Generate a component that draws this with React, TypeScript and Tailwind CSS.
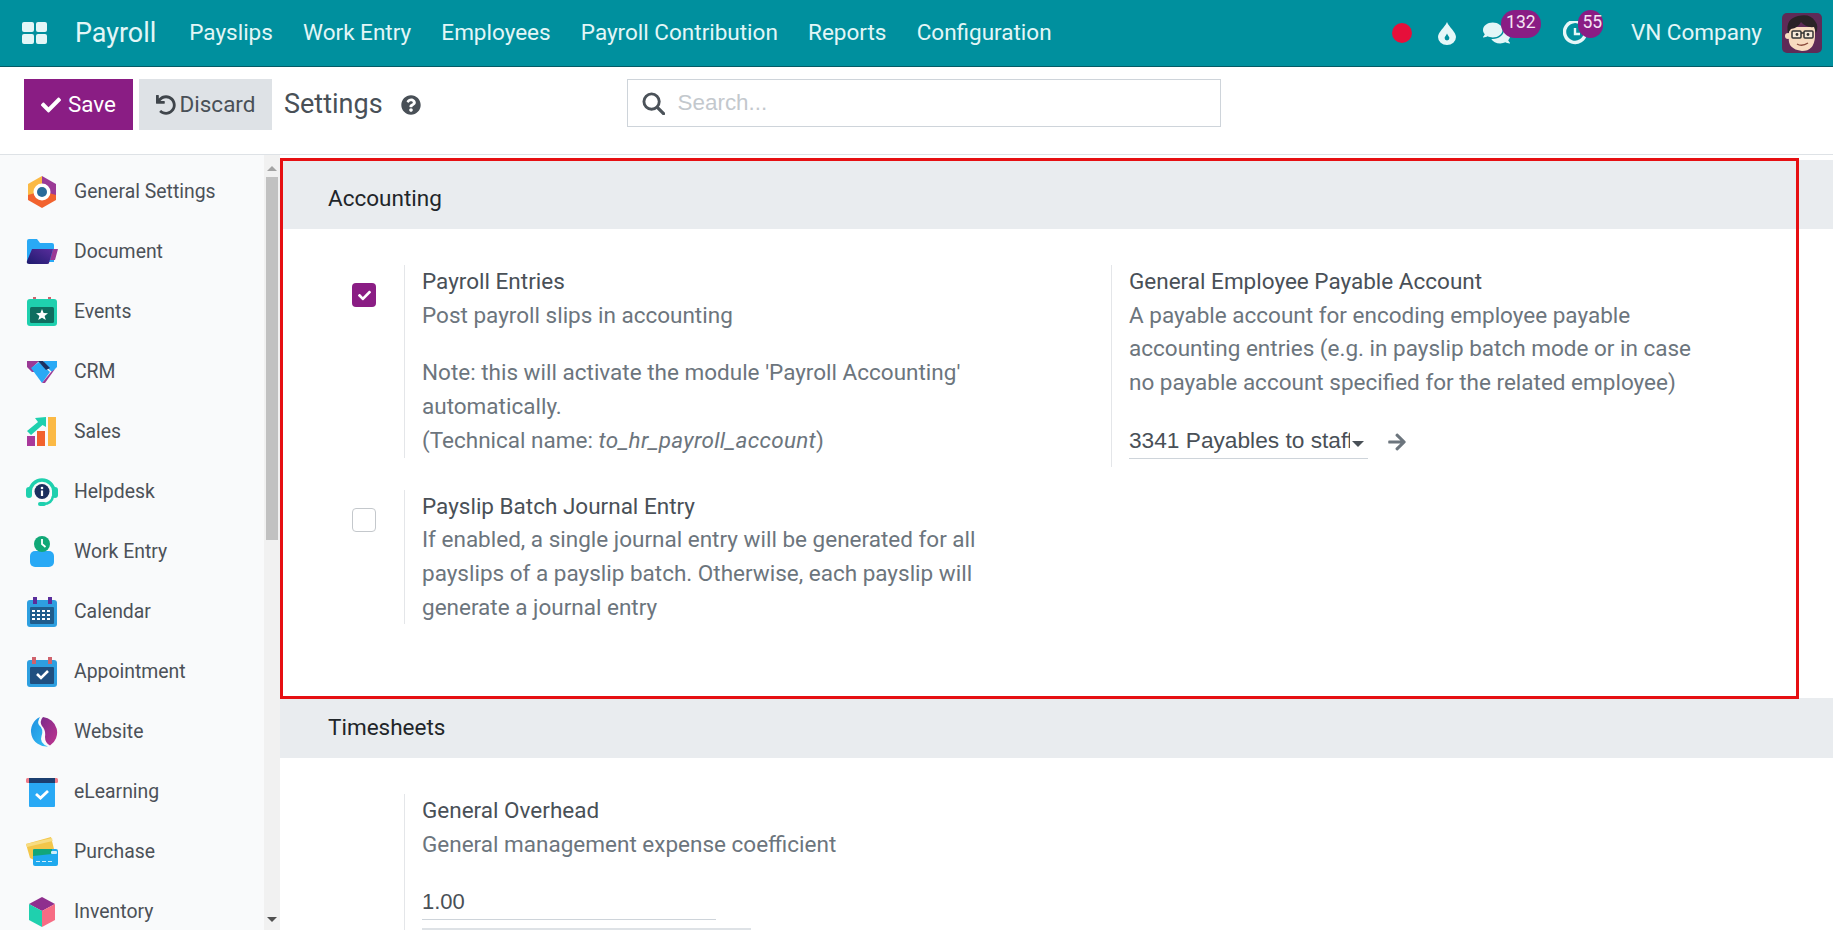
import { ReactNode } from 'react';
import { FaArrowRight, FaCheck, FaComments, FaQuestionCircle, FaUndo } from 'react-icons/fa';

const navLinks = ['Payslips', 'Work Entry', 'Employees', 'Payroll Contribution', 'Reports', 'Configuration'];

// App icons in the sidebar, drawn on a 32 box
function GeneralIcon() {
  return (
    <svg viewBox="0 0 32 32" className="h-[32px] w-[32px]">
      <path d="M16 0 L2 8 L2 20 L16 16 Z" fill="#fbb945" />
      <path d="M16 0 L30 8 L30 20 L16 16 Z" fill="#9b3a96" />
      <path d="M2 19 L16 15 L30 19 L30 24 L16 32 L2 24 Z" fill="#f2622e" />
      <circle cx="16" cy="16" r="8.5" fill="#fff" />
      <circle cx="16" cy="16" r="5" fill="#2a6a9a" />
    </svg>
  );
}

function DocumentIcon() {
  return (
    <svg viewBox="0 0 32 32" className="h-[32px] w-[32px]">
      <defs>
        <linearGradient id="docFront" x1="0" y1="1" x2="1" y2="0">
          <stop offset="0" stopColor="#1d1a6e" />
          <stop offset="1" stopColor="#5a2d9c" />
        </linearGradient>
      </defs>
      <path d="M1 5 Q1 3 3 3 L11 3 L14 7 L26 7 Q28 7 28 9 L28 26 L1 26 Z" fill="#29a9f5" />
      <path d="M7 13 L32 13 L29 24 L24 24 L27 13 Z" fill="#9b3a96" />
      <path d="M6 13 L27 13 L23 27 Q23 28 21 28 L3 28 Q0 28 1 25 Z" fill="url(#docFront)" />
    </svg>
  );
}

function EventsIcon() {
  return (
    <svg viewBox="0 0 32 32" className="h-[32px] w-[32px]">
      <rect x="7" y="1" width="3" height="6" fill="#d0626c" />
      <rect x="22" y="1" width="3" height="6" fill="#d0626c" />
      <rect x="1" y="3" width="30" height="27" rx="3" fill="#1fd0ae" />
      <rect x="4" y="11" width="24" height="16" rx="1.5" fill="#0f6e60" />
      <path d="M16 13 L17.6 17 L22 17.3 L18.6 20 L19.8 24 L16 21.8 L12.2 24 L13.4 20 L10 17.3 L14.4 17 Z" fill="#fff" />
    </svg>
  );
}

function CrmIcon() {
  return (
    <svg viewBox="0 0 32 32" className="h-[32px] w-[32px]">
      <path d="M1 5 L13 5 L6 12 L10 16 L6 16 L1 11 Z" fill="#9b3a96" />
      <path d="M5 12 L13 6 L24 16 L16 27 Z" fill="#29a9f5" />
      <path d="M18 5 L31 5 L31 11 L26 16 L16 7 Z" fill="#29a9f5" />
      <path d="M12 5 L17 5 L24 12 L20 14 Z" fill="#1c2f5e" />
      <path d="M16 27 L25 16 L29 13 L19 27 Z" fill="#9b3a96" />
    </svg>
  );
}

function SalesIcon() {
  return (
    <svg viewBox="0 0 32 32" className="h-[32px] w-[32px]">
      <rect x="1" y="20" width="8" height="10" fill="#a9399b" />
      <rect x="11" y="15" width="8" height="15" fill="#f2622e" />
      <rect x="22" y="1" width="8" height="29" fill="#fbb945" />
      <path d="M1 15 L12 6 L9 2 L20 1 L20 11 L16.5 9 L5 19 Z" fill="#1fd0ae" />
    </svg>
  );
}

function HelpdeskIcon() {
  return (
    <svg viewBox="0 0 32 32" className="h-[32px] w-[32px]">
      <path d="M4 16 A12 12 0 0 1 28 16" fill="none" stroke="#1fd0ae" strokeWidth="3.5" />
      <rect x="0" y="11" width="6" height="11" rx="3" fill="#1fd0ae" />
      <rect x="26" y="11" width="6" height="11" rx="3" fill="#1fd0ae" />
      <path d="M27 20 Q26 28 17 28" fill="none" stroke="#1fd0ae" strokeWidth="2.5" />
      <rect x="12" y="26" width="8" height="4" rx="2" fill="#1fd0ae" />
      <circle cx="16" cy="15.5" r="7.5" fill="#1c2f5e" />
      <circle cx="16" cy="12" r="1.3" fill="#fff" />
      <rect x="14.9" y="14.5" width="2.2" height="5.5" fill="#fff" />
    </svg>
  );
}

function WorkEntryIcon() {
  return (
    <svg viewBox="0 0 32 32" className="h-[32px] w-[32px]">
      <rect x="4" y="15" width="24" height="16" rx="5" fill="#29a9f5" />
      <circle cx="16" cy="8" r="8" fill="#11a877" />
      <path d="M16 3 L16 8 L19.5 11" fill="none" stroke="#fff" strokeWidth="1.8" />
    </svg>
  );
}

function CalendarIcon() {
  return (
    <svg viewBox="0 0 32 32" className="h-[32px] w-[32px]">
      <rect x="1" y="4" width="30" height="27" rx="3" fill="#2e9fe0" />
      <rect x="7" y="1" width="4" height="7" fill="#5a2d9c" />
      <rect x="22" y="1" width="4" height="7" fill="#5a2d9c" />
      <rect x="4" y="11" width="24" height="17" rx="1" fill="#1f5c8c" />
      <path d="M6 14h3v2h-3z M11 14h3v2h-3z M16 14h3v2h-3z M21 14h3v2h-3z M6 18h3v2h-3z M11 18h3v2h-3z M16 18h3v2h-3z M21 18h3v2h-3z M6 22h3v2h-3z M11 22h3v2h-3z M16 22h3v2h-3z M21 22h3v2h-3z" fill="#fff" />
    </svg>
  );
}

function AppointmentIcon() {
  return (
    <svg viewBox="0 0 32 32" className="h-[32px] w-[32px]">
      <rect x="1" y="4" width="30" height="27" rx="3" fill="#2e9fe0" />
      <rect x="6" y="1" width="4" height="7" fill="#d0626c" />
      <rect x="22" y="1" width="4" height="7" fill="#d0626c" />
      <rect x="4" y="11" width="24" height="17" rx="1" fill="#1f4f80" />
      <path d="M11 18 L15 22 L22 15" fill="none" stroke="#fff" strokeWidth="2.6" />
    </svg>
  );
}

function WebsiteIcon() {
  return (
    <svg viewBox="0 0 32 32" className="h-[32px] w-[32px]">
      <defs>
        <linearGradient id="webLeft" x1="0" y1="0" x2="1" y2="1">
          <stop offset="0" stopColor="#1f8fe0" />
          <stop offset="1" stopColor="#35c0f5" />
        </linearGradient>
        <linearGradient id="webRight" x1="0" y1="0" x2="1" y2="1">
          <stop offset="0" stopColor="#7b2a8a" />
          <stop offset="1" stopColor="#c0358f" />
        </linearGradient>
      </defs>
      <path d="M14 1 A15.5 15.5 0 0 0 22 30.5 Q13 27 15.5 20 Q18 13 13 9 Q11 6 14 1 Z" fill="url(#webLeft)" />
      <path d="M17 1 A15.5 15.5 0 0 1 24 29.5 Q19 27 19 21 Q20 14 16 10 Q13 5 17 1 Z" fill="url(#webRight)" />
    </svg>
  );
}

function ElearningIcon() {
  return (
    <svg viewBox="0 0 32 32" className="h-[32px] w-[32px]">
      <rect x="3" y="5" width="26" height="26" rx="1" fill="#29a9f5" />
      <rect x="0" y="2" width="32" height="5" rx="1.5" fill="#ef7b88" />
      <rect x="3" y="2" width="26" height="5" fill="#1c3f70" />
      <path d="M10 18 L14.5 22 L22 15" fill="none" stroke="#fff" strokeWidth="2.8" />
    </svg>
  );
}

function PurchaseIcon() {
  return (
    <svg viewBox="0 0 32 32" className="h-[32px] w-[32px]">
      <path d="M0 8 L25 1 L28 13 L8 24 L4 22 Z" fill="#f3c64a" />
      <path d="M0 8 L26 2 L26.7 5 L1 11 Z" fill="#f7dc82" />
      <rect x="7" y="13" width="25" height="17" rx="2" fill="#1fa9ee" />
      <path d="M7 14 Q7 13 9 13 L26 13 L26 18 L7 20 Z" fill="#12a67a" />
      <rect x="25" y="15" width="6" height="3" rx="1" fill="#cfeefc" />
      <path d="M10 25h4v1h-4z M16 25h4v1h-4z M22 25h4v1h-4z" fill="#cfeefc" />
    </svg>
  );
}

function InventoryIcon() {
  return (
    <svg viewBox="0 0 32 32" className="h-[32px] w-[32px]">
      <path d="M16 1 L29 8 L16 15 L3 8 Z" fill="#8f2f8e" />
      <path d="M3 8 L16 15 L16 31 L3 24 Z" fill="#1fd0ae" />
      <path d="M29 8 L16 15 L16 31 L29 24 Z" fill="#f76c84" />
    </svg>
  );
}

const apps: { name: string; icon: ReactNode }[] = [
  { name: 'General Settings', icon: <GeneralIcon /> },
  { name: 'Document', icon: <DocumentIcon /> },
  { name: 'Events', icon: <EventsIcon /> },
  { name: 'CRM', icon: <CrmIcon /> },
  { name: 'Sales', icon: <SalesIcon /> },
  { name: 'Helpdesk', icon: <HelpdeskIcon /> },
  { name: 'Work Entry', icon: <WorkEntryIcon /> },
  { name: 'Calendar', icon: <CalendarIcon /> },
  { name: 'Appointment', icon: <AppointmentIcon /> },
  { name: 'Website', icon: <WebsiteIcon /> },
  { name: 'eLearning', icon: <ElearningIcon /> },
  { name: 'Purchase', icon: <PurchaseIcon /> },
  { name: 'Inventory', icon: <InventoryIcon /> },
];

function Avatar() {
  return (
    <svg viewBox="0 0 40 40" className="h-[40px] w-[40px]">
      <rect width="40" height="40" rx="5" fill="#5e2b57" />
      <path d="M7 24 Q5 36 20 38 Q32 38 33 24 L33 14 L7 14 Z" fill="#f8dcc0" />
      <path d="M6 20 Q3 6 16 3 Q28 0 33 8 Q37 13 34 20 L32 14 Q24 15 19 9 Q16 15 9 16 Z" fill="#2a2226" />
      <circle cx="6" cy="23" r="3" fill="#f8dcc0" />
      <rect x="10" y="18" width="9" height="7" rx="1" fill="#f6e9d8" stroke="#333" strokeWidth="1.5" />
      <rect x="22" y="18" width="9" height="7" rx="1" fill="#f6e9d8" stroke="#333" strokeWidth="1.5" />
      <path d="M19 20 L22 20" stroke="#333" strokeWidth="1.5" />
      <circle cx="15" cy="21.5" r="1.4" fill="#333" />
      <circle cx="26" cy="21.5" r="1.4" fill="#333" />
      <path d="M15 31 Q20 34 26 30" fill="none" stroke="#8a4a3a" strokeWidth="1.4" />
    </svg>
  );
}

function ClockIcon() {
  return (
    <svg viewBox="0 0 24 24" className="h-[24px] w-[24px]">
      <path d="M19.5 3.5 A10.5 10.5 0 1 0 22.5 12" fill="none" stroke="#e6f7f8" strokeWidth="3.4" />
      <path d="M12 7 L12 13 L17 13" fill="none" stroke="#e6f7f8" strokeWidth="2.4" />
    </svg>
  );
}

function DropIcon() {
  return (
    <svg viewBox="0 0 18 23" className="ml-[26px] h-[23px] w-[18px]">
      <path d="M9 0 C7 5 0 10 0 15 A9 8 0 0 0 18 15 C18 10 11 5 9 0 Z" fill="#e6f7f8" />
      <path d="M9 11.5 C8.4 13.5 6.6 14.5 6.6 16 A2.4 2.4 0 0 0 11.4 16 C11.4 14.5 9.6 13.5 9 11.5 Z" fill="#00909e" />
    </svg>
  );
}

function SearchIcon() {
  return (
    <svg viewBox="0 0 24 24" className="h-[23px] w-[23px]">
      <circle cx="10" cy="10" r="8" fill="none" stroke="#4b5259" strokeWidth="3" />
      <path d="M16 16 L22.5 22.5" stroke="#4b5259" strokeWidth="3.4" strokeLinecap="round" />
    </svg>
  );
}

function Badge({ children, className }: { children: ReactNode; className: string }) {
  return (
    <span className={`absolute top-[-11px] flex h-[28px] items-center justify-center rounded-full bg-[#8a1d84] pb-[4px] text-[17.5px] text-[#f5e6f4] ${className}`}>
      {children}
    </span>
  );
}

function SectionBand({ title, className }: { title: string; className: string }) {
  return (
    <div className={`flex items-center bg-[#e9ecef] pl-[48px] text-[22.5px] text-[#212529] ${className}`}>
      {title}
    </div>
  );
}

function SettingBox({ checked, children, className }: { checked?: boolean; children: ReactNode; className?: string }) {
  return (
    <div className="flex w-[707px]">
      <div className="w-[64px] shrink-0 pl-[12px] pt-[18px]">
        {checked === true && (
          <span className="flex h-[24px] w-[24px] items-center justify-center rounded-[4px] bg-[#8a1d84] text-white">
            <FaCheck className="h-[13px] w-[13px]" />
          </span>
        )}
        {checked === false && (
          <span className="block h-[24px] w-[24px] rounded-[4px] border border-[#c4c8cc] bg-white" />
        )}
      </div>
      <div className={`max-w-[593px] border-l border-[#e4e6e9] pl-[17px] text-[22.5px] leading-[33.7px] text-[#6c757d] ${className ?? ''}`}>
        {children}
      </div>
    </div>
  );
}

function Title({ children }: { children: ReactNode }) {
  return <div className="text-[#495057]">{children}</div>;
}

export default function App() {
  return (
    <div className="relative flex h-[930px] w-[1833px] flex-col overflow-hidden bg-white font-['Roboto',sans-serif]">
      <nav className="flex h-[67px] shrink-0 items-center border-b border-[#045b66] bg-[#00909e] text-[#e3f6f7]">
        <div className="ml-[22px] grid h-[22px] w-[25px] grid-cols-2 gap-[2px]">
          <span className="rounded-[2px] bg-[#e3f6f7]" />
          <span className="rounded-[2px] bg-[#e3f6f7]" />
          <span className="rounded-[2px] bg-[#e3f6f7]" />
          <span className="rounded-[2px] bg-[#e3f6f7]" />
        </div>
        <span className="ml-[28px] mr-[33px] text-[26.9px]">Payroll</span>
        <div className="flex gap-[30.2px] text-[22.5px]">
          {navLinks.map((link) => (
            <span key={link}>{link}</span>
          ))}
        </div>
        <div className="ml-auto flex items-center">
          <span className="h-[20px] w-[20px] rounded-full bg-[#e60f3a]" />
          <DropIcon />
          <span className="relative ml-[26px] block h-[24px] w-[28px]">
            <FaComments className="h-[24px] w-[29px]" />
            <Badge className="left-[19px] w-[40px]">132</Badge>
          </span>
          <span className="relative ml-[53px] block h-[24px] w-[24px]">
            <ClockIcon />
            <Badge className="left-[15px] w-[25px] pl-[4px]">55</Badge>
          </span>
          <span className="ml-[44px] text-[22.5px]">VN Company</span>
          <span className="ml-[20px] mr-[11px] block h-[40px] w-[40px]">
            <Avatar />
          </span>
        </div>
      </nav>

      <div className="flex h-[88px] shrink-0 items-start border-b border-[#dee2e6] pl-[24px] pt-[12px]">
        <button className="flex h-[51px] w-[109px] items-center justify-center gap-[7px] bg-[#8a1d84] text-[22.4px] text-white">
          <FaCheck className="h-[20px] w-[20px]" />
          Save
        </button>
        <button className="ml-[6px] flex h-[51px] w-[133px] items-center justify-center gap-[4px] bg-[#dee2e6] text-[22.5px] text-[#495057]">
          <FaUndo className="h-[20px] w-[20px] text-[#3f454b]" />
          Discard
        </button>
        <span className="ml-[12px] flex h-[51px] items-center text-[27px] text-[#495057]">Settings</span>
        <span className="ml-[18px] flex h-[51px] items-center text-[#495057]">
          <FaQuestionCircle className="h-[20px] w-[20px]" />
        </span>
        <div className="ml-[206px] flex h-[48px] w-[594px] items-center border border-[#ced4da] pl-[14px]">
          <SearchIcon />
          <span className="ml-[13px] font-['Liberation_Sans',sans-serif] text-[22.4px] text-[#c3c8cd]">Search...</span>
        </div>
      </div>

      <div className="flex min-h-0 flex-1">
        <aside className="w-[264px] shrink-0 overflow-hidden bg-[#f9fafb] pt-[7px]">
          {apps.map((app) => (
            <div key={app.name} className="flex h-[60px] items-center pl-[26px] text-[19.4px] text-[#4c5158]">
              <span className="w-[48px] shrink-0">{app.icon}</span>
              {app.name}
            </div>
          ))}
        </aside>
        <div className="flex w-[16px] shrink-0 flex-col items-center bg-[#f1f1f1] pt-[11px]">
          <span className="h-0 w-0 border-x-[5px] border-b-[5px] border-x-transparent border-b-[#a3a3a3]" />
          <span className="mt-[6px] h-[363px] w-[12px] bg-[#c1c1c1]" />
          <span className="mt-[377px] h-0 w-0 border-x-[5px] border-t-[5px] border-x-transparent border-t-[#505050]" />
        </div>

        <main className="min-w-0 flex-1 pt-[5px]">
          <SectionBand title="Accounting" className="h-[69px] pt-[9px]" />
          <div className="flex h-[469px] pl-[60px] pt-[36px]">
            <div className="flex flex-col gap-[32px]">
              <SettingBox checked>
                <Title>Payroll Entries</Title>
                <div>Post payroll slips in accounting</div>
                <div className="mt-[24px]">
                  Note: this will activate the module 'Payroll Accounting' automatically.
                  <br />
                  (Technical name: <em className="tracking-[0.3px]">to_hr_payroll_account</em>)
                </div>
              </SettingBox>
              <SettingBox checked={false}>
                <Title>Payslip Batch Journal Entry</Title>
                <div className="max-w-[575px]">
                  If enabled, a single journal entry will be generated for all payslips of a payslip batch. Otherwise, each payslip will generate a journal entry
                </div>
              </SettingBox>
            </div>
            <div>
              <SettingBox className="pb-[8px]">
                <Title>General Employee Payable Account</Title>
                <div className="max-w-[575px]">
                  A payable account for encoding employee payable accounting entries (e.g. in payslip batch mode or in case no payable account specified for the related employee)
                </div>
                <div className="mt-[25px] flex items-center">
                  <div className="relative flex h-[34px] w-[239px] items-center border-b border-[#ced4da] font-['Liberation_Sans',sans-serif] text-[22.7px] text-[#495057]">
                    <span className="w-[221px] overflow-hidden whitespace-nowrap">3341 Payables to staff</span>
                    <span className="ml-[2px] mt-[6px] h-0 w-0 border-x-[6px] border-t-[6px] border-x-transparent border-t-[#495057]" />
                  </div>
                  <FaArrowRight className="ml-[19px] h-[20px] w-[20px] text-[#6c757d]" />
                </div>
              </SettingBox>
            </div>
          </div>

          <SectionBand title="Timesheets" className="h-[60px] pt-[0px]" />
          <div className="pl-[60px] pt-[36px]">
            <SettingBox>
              <Title>General Overhead</Title>
              <div>General management expense coefficient</div>
              <div className="mt-[24px] h-[34.5px] w-[294px] border-b border-[#ced4da] font-['Liberation_Sans',sans-serif] text-[22px] text-[#495057]">
                1.00
              </div>
              <div className="mt-[8px] h-[20px] w-[329px] bg-[#dee2e6]" />
            </SettingBox>
          </div>
        </main>
      </div>

      {/* red highlight drawn over the Accounting block */}
      <div className="pointer-events-none absolute left-[280px] top-[158px] h-[541px] w-[1519px] border-[3px] border-[#e60f12]" />
    </div>
  );
}
